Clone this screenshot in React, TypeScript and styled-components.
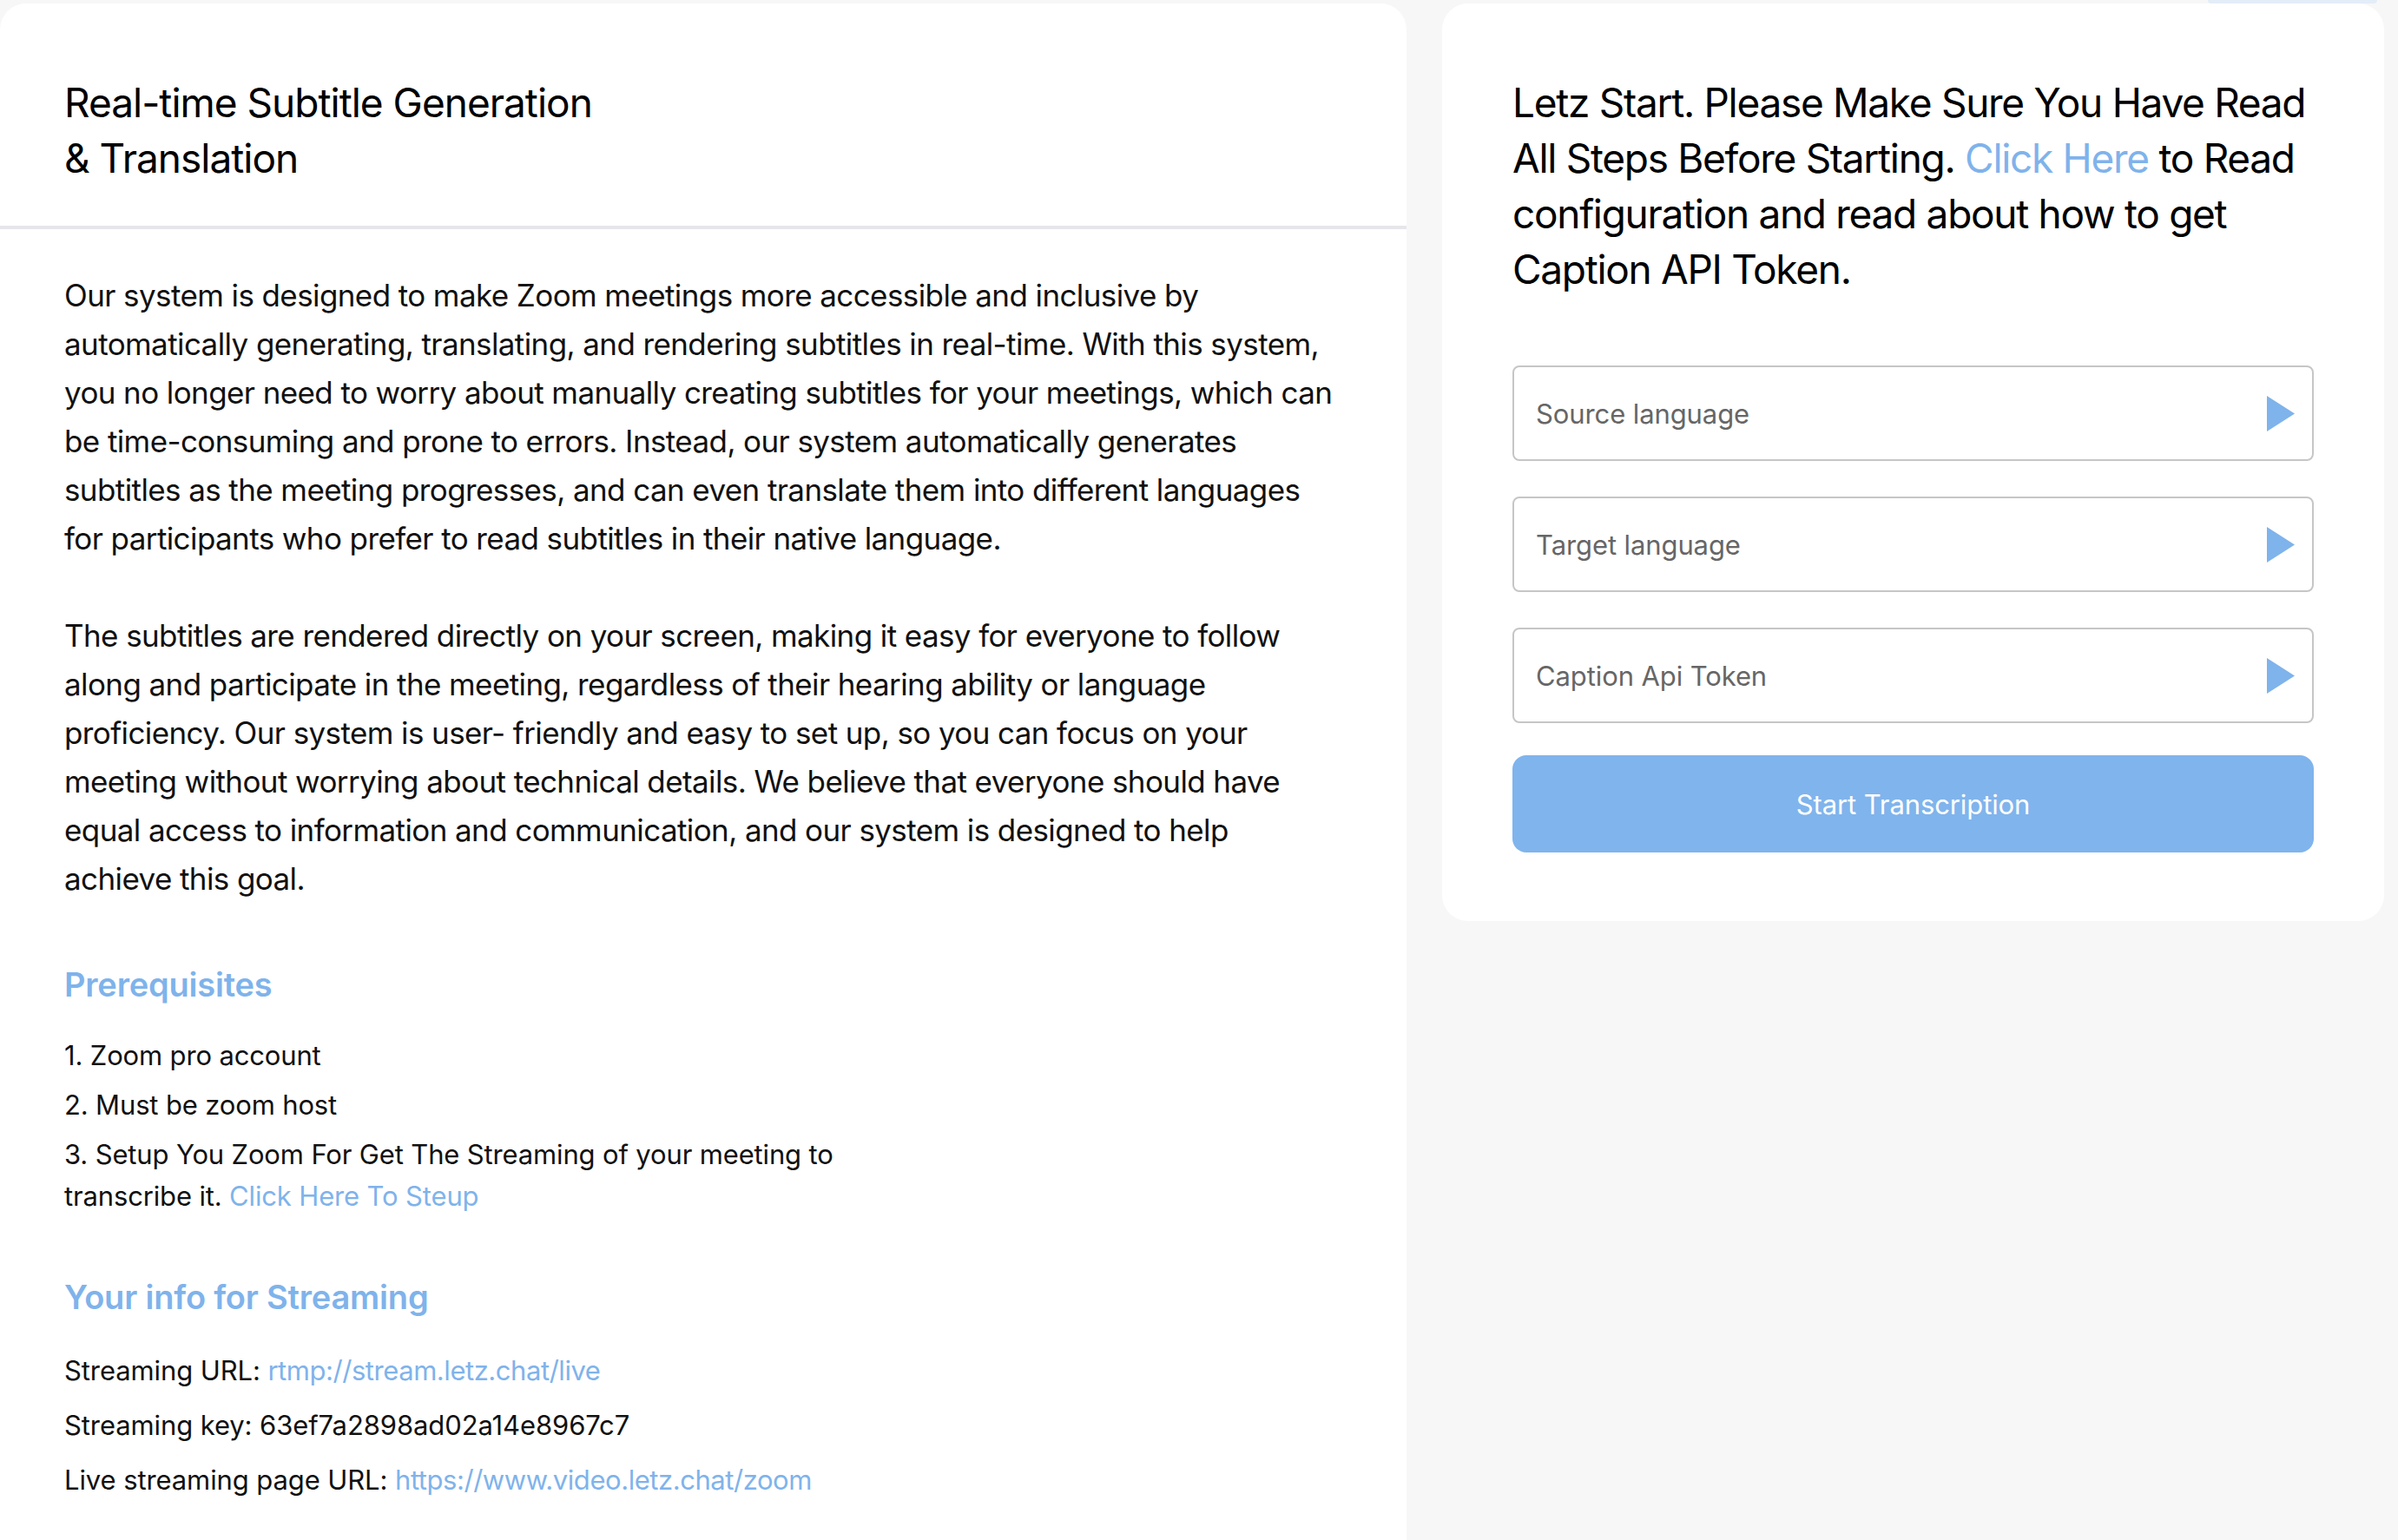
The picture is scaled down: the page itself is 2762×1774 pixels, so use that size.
import React from "react";
import styled, { createGlobalStyle } from "styled-components";

const GlobalStyle = createGlobalStyle`
  html, body {
    margin: 0;
    padding: 0;
    background: #f7f7f7;
    font-family: Inter, "Noto Sans", "Liberation Sans", sans-serif;
    color: #111;
  }
  * { box-sizing: border-box; }
`;

const BLUE = "#7fb3eb";

const Page = styled.div`
  display: flex;
  flex-direction: column;
  width: 2762px;
  min-height: 1774px;
  overflow: hidden;
`;

const TopStrip = styled.div`
  height: 4px;
  display: flex;
  justify-content: flex-end;
  padding-right: 24px;
`;

const TopTab = styled.div`
  width: 195px;
  height: 4px;
  background: #e3edf8;
  border-radius: 0 0 6px 6px;
`;

const Columns = styled.div`
  display: grid;
  grid-template-columns: 1620px 1085px;
  column-gap: 41px;
  align-items: start;
`;

const Card = styled.section<{ $full?: boolean }>`
  background: #ffffff;
  border-radius: ${(p) => (p.$full ? "30px 30px 0 0" : "30px")};
  min-height: ${(p) => (p.$full ? "1800px" : "auto")};
`;

const CardHeader = styled.header`
  padding: 82px 74px 46px 74px;
  border-bottom: 4px solid #e6e6ea;
`;

const Title = styled.h1`
  margin: 0;
  font-size: 46px;
  line-height: 64px;
  font-weight: 400;
  color: #000;
  letter-spacing: -1px;
  white-space: nowrap;
`;

const CardBody = styled.div`
  padding: 48px 74px 0 74px;
`;

const Paragraph = styled.p<{ $gap?: number }>`
  margin: 0 0 ${(p) => p.$gap ?? 0}px 0;
  font-size: 35px;
  line-height: 56px;
  letter-spacing: -0.6px;
  color: #111;
  white-space: nowrap;
`;

const SectionTitle = styled.h2<{ $top: number; $bottom: number }>`
  margin: ${(p) => p.$top}px 0 ${(p) => p.$bottom}px 0;
  font-size: 38px;
  line-height: 56px;
  font-weight: 600;
  letter-spacing: -0.2px;
  color: ${BLUE};
`;

const StepList = styled.ol`
  list-style: none;
  margin: 0;
  padding: 0;
  display: flex;
  flex-direction: column;
  gap: 9px;
`;

const Step = styled.li`
  font-size: 31px;
  line-height: 48px;
  letter-spacing: -0.15px;
  color: #111;
  white-space: nowrap;
`;

const InfoList = styled.div`
  display: flex;
  flex-direction: column;
  gap: 15px;
`;

const InfoRow = styled.div`
  font-size: 31px;
  line-height: 48px;
  letter-spacing: -0.1px;
  color: #111;
`;

const Link = styled.a`
  color: ${BLUE};
  text-decoration: none;
`;

const UrlLink = styled(Link)`
  letter-spacing: -0.45px;
`;

const SideCard = styled(Card)`
  padding: 82px 81px 79px 81px;
`;

const SideHeading = styled.h2`
  margin: 0 0 79px 0;
  font-size: 46px;
  line-height: 64px;
  font-weight: 400;
  color: #000;
  letter-spacing: -1.3px;
  white-space: nowrap;
`;

const Form = styled.div`
  display: flex;
  flex-direction: column;
  gap: 41px;
`;

const Field = styled.div`
  height: 110px;
  border: 2px solid #c6c6c6;
  border-radius: 8px;
  display: flex;
  align-items: center;
  justify-content: space-between;
  padding: 0 20px 0 25px;
`;

const FieldLabel = styled.span`
  font-size: 31px;
  letter-spacing: -0.1px;
  color: #666;
`;

const Arrow = styled.svg`
  width: 32px;
  height: 41px;
  display: block;
`;

const StartButton = styled.button`
  margin-top: -4px;
  height: 112px;
  border: none;
  border-radius: 16px;
  background: #80b4ec;
  color: #fff;
  font-family: inherit;
  font-size: 31px;
  letter-spacing: -0.1px;
  cursor: pointer;
`;

const fields = ["Source language", "Target language", "Caption Api Token"];

const intro1 = [
  "Our system is designed to make Zoom meetings more accessible and inclusive by",
  "automatically generating, translating, and rendering subtitles in real-time. With this system,",
  "you no longer need to worry about manually creating subtitles for your meetings, which can",
  "be time-consuming and prone to errors. Instead, our system automatically generates",
  "subtitles as the meeting progresses, and can even translate them into different languages",
  "for participants who prefer to read subtitles in their native language.",
];

const intro2 = [
  "The subtitles are rendered directly on your screen, making it easy for everyone to follow",
  "along and participate in the meeting, regardless of their hearing ability or language",
  "proficiency. Our system is user- friendly and easy to set up, so you can focus on your",
  "meeting without worrying about technical details. We believe that everyone should have",
  "equal access to information and communication, and our system is designed to help",
  "achieve this goal.",
];

function Lines({ lines }: { lines: string[] }) {
  return (
    <>
      {lines.map((l, i) => (
        <React.Fragment key={i}>
          {i > 0 && <br />}
          {l}
        </React.Fragment>
      ))}
    </>
  );
}

export default function App() {
  return (
    <>
      <GlobalStyle />
      <Page>
        <TopStrip>
          <TopTab />
        </TopStrip>
        <Columns>
          <Card $full>
            <CardHeader>
              <Title>
                Real-time Subtitle Generation
                <br />& Translation
              </Title>
            </CardHeader>
            <CardBody>
              <Paragraph $gap={56}>
                <Lines lines={intro1} />
              </Paragraph>
              <Paragraph>
                <Lines lines={intro2} />
              </Paragraph>

              <SectionTitle $top={66} $bottom={30}>
                Prerequisites
              </SectionTitle>
              <StepList>
                <Step>1. Zoom pro account</Step>
                <Step>2. Must be zoom host</Step>
                <Step>
                  3. Setup You Zoom For Get The Streaming of your meeting to
                  <br />
                  transcribe it. <Link href="#">Click Here To Steup</Link>
                </Step>
              </StepList>

              <SectionTitle $top={64} $bottom={33}>
                Your info for Streaming
              </SectionTitle>
              <InfoList>
                <InfoRow>
                  Streaming URL: <UrlLink href="#">rtmp://stream.letz.chat/live</UrlLink>
                </InfoRow>
                <InfoRow>Streaming key: 63ef7a2898ad02a14e8967c7</InfoRow>
                <InfoRow>
                  Live streaming page URL:{" "}
                  <UrlLink href="#">https://www.video.letz.chat/zoom</UrlLink>
                </InfoRow>
              </InfoList>
            </CardBody>
          </Card>

          <SideCard>
            <SideHeading>
              Letz Start. Please Make Sure You Have Read
              <br />
              All Steps Before Starting. <Link href="#">Click Here</Link> to Read
              <br />
              configuration and read about how to get
              <br />
              Caption API Token.
            </SideHeading>
            <Form>
              {fields.map((f) => (
                <Field key={f}>
                  <FieldLabel>{f}</FieldLabel>
                  <Arrow viewBox="0 0 32 41">
                    <polygon points="0,0 32,20.5 0,41" fill="#7fb3eb" />
                  </Arrow>
                </Field>
              ))}
              <StartButton>Start Transcription</StartButton>
            </Form>
          </SideCard>
        </Columns>
      </Page>
    </>
  );
}
